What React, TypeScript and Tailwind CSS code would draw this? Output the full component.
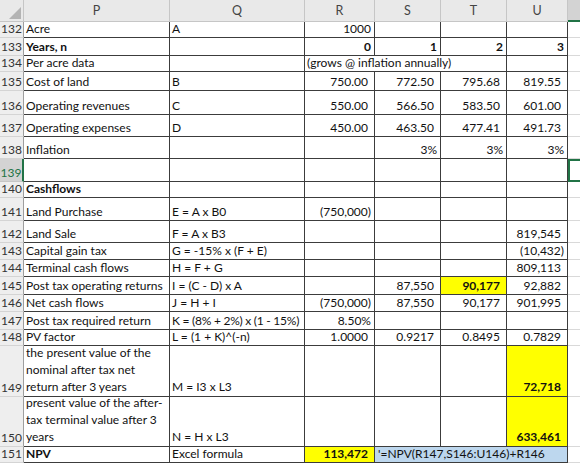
import React from 'react'

// Spreadsheet extract: NPV of a land investment, rows 132–151, columns P–U.

type Cell = {
  t?: React.ReactNode
  r?: boolean // right aligned
  b?: boolean // bold
  acct?: boolean // accounting format: room for a closing paren on the right
  fill?: 'yellow' | 'blue'
  span?: 1 | 3
  tight?: boolean
}

type Row = { n: number; cells: Cell[]; wrap?: boolean }

const e: Cell = {}

const rows: Row[] = [
  { n: 132, cells: [{ t: 'Acre' }, { t: 'A' }, { t: '1000', r: true }, e, e, e] },
  {
    n: 133,
    cells: [
      { t: 'Years, n', b: true },
      e,
      { t: '0', r: true, b: true },
      { t: '1', r: true, b: true },
      { t: '2', r: true, b: true },
      { t: '3', r: true, b: true }
    ]
  },
  { n: 134, cells: [{ t: 'Per acre data' }, e, { t: '(grows @ inflation annually)', span: 3 }, e] },
  {
    n: 135,
    cells: [
      { t: 'Cost of land' },
      { t: 'B' },
      { t: '750.00', r: true, acct: true },
      { t: '772.50', r: true, acct: true },
      { t: '795.68', r: true, acct: true },
      { t: '819.55', r: true, acct: true }
    ]
  },
  {
    n: 136,
    cells: [
      { t: 'Operating revenues' },
      { t: 'C' },
      { t: '550.00', r: true, acct: true },
      { t: '566.50', r: true, acct: true },
      { t: '583.50', r: true, acct: true },
      { t: '601.00', r: true, acct: true }
    ]
  },
  {
    n: 137,
    cells: [
      { t: 'Operating expenses' },
      { t: 'D' },
      { t: '450.00', r: true, acct: true },
      { t: '463.50', r: true, acct: true },
      { t: '477.41', r: true, acct: true },
      { t: '491.73', r: true, acct: true }
    ]
  },
  { n: 138, cells: [{ t: 'Inflation' }, e, e, { t: '3%', r: true }, { t: '3%', r: true }, { t: '3%', r: true }] },
  { n: 139, cells: [e, e, e, e, e, e] },
  { n: 140, cells: [{ t: 'Cashflows', b: true }, e, e, e, e, e] },
  { n: 141, cells: [{ t: 'Land Purchase' }, { t: 'E = A x B0' }, { t: '(750,000)', r: true }, e, e, e] },
  { n: 142, cells: [{ t: 'Land Sale' }, { t: 'F = A x B3' }, e, e, e, { t: '819,545', r: true, acct: true }] },
  { n: 143, cells: [{ t: 'Capital gain tax' }, { t: 'G = -15% x (F + E)' }, e, e, e, { t: '(10,432)', r: true }] },
  { n: 144, cells: [{ t: 'Terminal cash flows' }, { t: 'H = F + G' }, e, e, e, { t: '809,113', r: true, acct: true }] },
  {
    n: 145,
    cells: [
      { t: 'Post tax operating returns' },
      { t: 'I = (C - D) x A' },
      e,
      { t: '87,550', r: true, acct: true },
      { t: '90,177', r: true, acct: true, b: true, fill: 'yellow' },
      { t: '92,882', r: true, acct: true }
    ]
  },
  {
    n: 146,
    cells: [
      { t: 'Net cash flows' },
      { t: 'J = H + I' },
      { t: '(750,000)', r: true },
      { t: '87,550', r: true, acct: true },
      { t: '90,177', r: true, acct: true },
      { t: '901,995', r: true, acct: true }
    ]
  },
  {
    n: 147,
    cells: [
      { t: 'Post tax required return' },
      { t: 'K = (8% + 2%) x (1 - 15%)', tight: true },
      { t: '8.50%', r: true },
      e,
      e,
      e
    ]
  },
  {
    n: 148,
    cells: [
      { t: 'PV factor' },
      { t: 'L = (1 + K)^(-n)' },
      { t: '1.0000', r: true, acct: true },
      { t: '0.9217', r: true, acct: true },
      { t: '0.8495', r: true, acct: true },
      { t: '0.7829', r: true, acct: true }
    ]
  },
  {
    n: 149,
    wrap: true,
    cells: [
      {
        t: (
          <>
            the present value of the
            <br />
            nominal after tax net
            <br />
            return after 3 years
          </>
        )
      },
      { t: 'M = I3 x L3' },
      e,
      e,
      e,
      { t: '72,718', r: true, acct: true, b: true, fill: 'yellow' }
    ]
  },
  {
    n: 150,
    wrap: true,
    cells: [
      {
        t: (
          <>
            present value of the after-
            <br />
            tax terminal value after 3
            <br />
            years
          </>
        )
      },
      { t: 'N = H x L3' },
      e,
      e,
      e,
      { t: '633,461', r: true, acct: true, b: true, fill: 'yellow' }
    ]
  },
  {
    n: 151,
    cells: [
      { t: 'NPV', b: true },
      { t: 'Excel formula' },
      { t: '113,472', r: true, acct: true, b: true, fill: 'yellow' },
      { t: "'=NPV(R147,S146:U146)+R146", span: 3, fill: 'blue' }
    ]
  }
]

function DataCell({ c, wrap }: { c: Cell; wrap?: boolean }): React.JSX.Element {
  return (
    <div
      className={[
        'flex min-w-0 items-end overflow-visible whitespace-nowrap border-b border-r border-[#3c3c3c] pb-[1px] text-[#111]',
        c.span === 3 ? 'col-span-3' : '',
        c.r ? 'justify-end' : 'justify-start pl-[2px]',
        c.r ? (c.acct ? 'pr-[6px]' : 'pr-[3px]') : '',
        c.b ? 'font-bold' : '',
        c.tight ? 'tracking-[-0.25px]' : '',
        c.fill === 'yellow' ? 'bg-[#ffff00]' : c.fill === 'blue' ? 'bg-[#bdd7ee] pl-[3px]' : 'bg-white',
        wrap ? 'leading-[17px]' : 'leading-[15px]'
      ].join(' ')}
    >
      <span>{c.t}</span>
    </div>
  )
}

export default function App(): React.JSX.Element {
  const letters = ['P', 'Q', 'R', 'S', 'T', 'U']
  return (
    <div className="h-[463px] w-[580px] overflow-hidden bg-white font-['Lato',sans-serif] text-[12px]">
      <div className="grid grid-cols-[24px_146px_135px_70px_66px_66px_61px_12px] grid-rows-[22px_16px_18px_16px_19px_24px_22px_22px_23px_16px_23px_22px_17px_17px_18px_17px_18px_16px_51px_50px_16px]">
        {/* column headers */}
        <div className="relative border-b border-r border-[#c6c6c6] bg-[#e9e9e9]">
          <svg className="absolute left-0 top-0" width="24" height="22" viewBox="0 0 24 22">
            <polygon points="21,7 21,19 9,19" fill="#b4b4b4" />
          </svg>
        </div>
        {letters.map((l) => (
          <div
            key={l}
            className="flex items-center justify-center border-b border-r border-[#c6c6c6] bg-[#e9e9e9] pt-[1px] text-[12.5px] text-[#444]"
          >
            {l}
          </div>
        ))}
        <div className="border-b-2 border-[#217346] bg-[#d3d3d3]" />

        {rows.map((row) => {
          const selected = row.n === 139
          return (
            <React.Fragment key={row.n}>
              <div
                className={
                  selected
                    ? 'flex items-end justify-center border-b border-r-2 border-b-[#c6c6c6] border-r-[#217346] bg-[#d3d3d3] pb-[1px] leading-[15px] text-[#217346]'
                    : 'flex items-end justify-center border-b border-r border-b-[#d4d4d4] border-r-[#9e9e9e] bg-[#eeeeee] pb-[1px] leading-[15px] text-[#333]'
                }
              >
                {row.n}
              </div>
              {row.cells.map((c, i) => (
                <DataCell key={i} c={c} wrap={row.wrap} />
              ))}
              {selected ? (
                <div className="border-y-2 border-l-2 border-[#217346] bg-white" />
              ) : (
                <div className="border-b border-[#d9d9d9] bg-white" />
              )}
            </React.Fragment>
          )
        })}
      </div>
    </div>
  )
}
